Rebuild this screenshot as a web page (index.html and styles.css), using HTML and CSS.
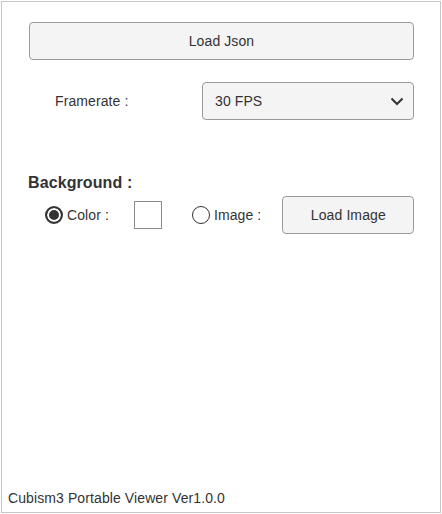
FILE: index.html
```html
<!DOCTYPE html>
<html lang="en">
  <head>
    <meta charset="UTF-8" />
    <meta name="viewport" content="width=device-width, initial-scale=1.0" />
    <title>Cubism3 Portable Viewer</title>
    <link rel="stylesheet" href="styles.css">
  </head>
  <body>
    <div class="viewer">
      <div class="controls">
        <button type="button" class="btn btn-wide" id="load-json">Load Json</button>

        <div class="form-row">
          <label for="framerate" class="row-label">Framerate :</label>
          <div class="select-wrap">
            <select id="framerate">
              <option>30 FPS</option>
              <option>60 FPS</option>
            </select>
            <svg class="chevron" width="14" height="9" viewBox="0 0 14 9">
              <path d="M1.5 1.5 L7 7 L12.5 1.5" fill="none" stroke="#333" stroke-width="2" />
            </svg>
          </div>
        </div>

        <h3 class="section-title">Background :</h3>
        <div class="bg-row">
          <input type="radio" name="bg" id="bg-color" class="radio" checked />
          <label for="bg-color" class="radio-label">Color :</label>
          <div class="swatch"></div>
          <input type="radio" name="bg" id="bg-image" class="radio radio-image" />
          <label for="bg-image" class="radio-label">Image :</label>
          <button type="button" class="btn btn-image" id="load-image">Load Image</button>
        </div>
      </div>

      <div class="footer">Cubism3 Portable Viewer Ver1.0.0</div>
    </div>
  </body>
</html>
```

FILE: styles.css
```css
body {
  font-family: "Liberation Sans", Arial, sans-serif;
  font-size: 14px;
  letter-spacing: 0.1px;
  color: #333;
  margin: 0;
  padding: 1px;
  background-color: #fff;
}
.viewer {
  width: 440px;
  height: 512px;
  box-sizing: border-box;
  border: 1px solid #c6c6c6;
  display: flex;
  flex-direction: column;
}
.controls {
  padding: 20px 26px 0 27px;
}
.btn {
  font-family: "Liberation Sans", Arial, sans-serif;
  font-size: 14px;
  letter-spacing: 0.1px;
  color: #333;
  background-color: #f4f4f4;
  border: 1px solid #9a9a9a;
  border-radius: 4px;
  height: 38px;
  padding: 0;
  cursor: pointer;
}
.btn-wide {
  display: block;
  width: 385px;
}
.form-row {
  display: flex;
  align-items: center;
  margin-top: 22px;
  height: 38px;
}
.row-label {
  width: 173px;
  padding-left: 26px;
  box-sizing: border-box;
}
.select-wrap {
  position: relative;
  width: 212px;
  height: 38px;
}
.select-wrap select {
  appearance: none;
  -webkit-appearance: none;
  width: 100%;
  height: 100%;
  font-family: "Liberation Sans", Arial, sans-serif;
  font-size: 14px;
  letter-spacing: 0.1px;
  color: #333;
  background-color: #f4f4f4;
  border: 1px solid #9a9a9a;
  border-radius: 4px;
  padding: 0 12px;
  margin: 0;
}
.chevron {
  position: absolute;
  right: 10px;
  top: 15px;
  pointer-events: none;
}
.section-title {
  font-size: 16px;
  line-height: 18px;
  font-weight: bold;
  margin: 54px 0 0 -1px;
}
.bg-row {
  display: flex;
  align-items: center;
  margin-top: 4px;
  height: 38px;
}
.bg-row > * {
  flex-shrink: 0;
}
.radio {
  appearance: none;
  -webkit-appearance: none;
  width: 18px;
  height: 18px;
  margin: 0 0 0 16px;
  border: 1.5px solid #333;
  border-radius: 50%;
  background-color: #fff;
  box-sizing: border-box;
}
.radio:checked {
  border-width: 2px;
  background-color: #333;
  box-shadow: inset 0 0 0 2px #fff;
}
.radio-image {
  margin-left: 30px;
}
.radio-label {
  margin-left: 4px;
  white-space: nowrap;
}
.swatch {
  width: 28px;
  height: 28px;
  box-sizing: border-box;
  border: 1px solid #8a8a8a;
  background-color: #fff;
  margin-left: 25px;
}
.btn-image {
  width: 132px;
  margin-left: 21px;
}
.footer {
  margin-top: auto;
  padding: 0 0 6px 6px;
  line-height: 16px;
}
```
